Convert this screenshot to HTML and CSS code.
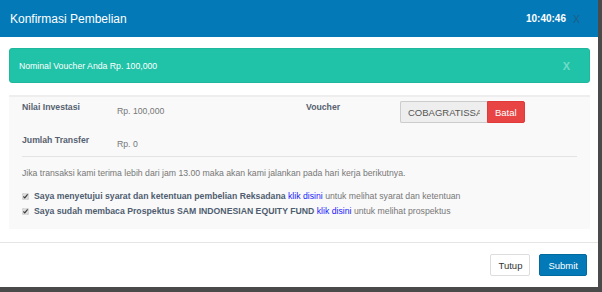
FILE: index.html
```html
<!DOCTYPE html>
<html lang="id">
<head>
    <meta charset="UTF-8">
    <title>Konfirmasi Pembelian</title>
    <link rel="stylesheet" href="styles.css">
</head>
<body>

    <div class="modal">
        <!-- Header -->
        <div class="modal-header">
            <h4 class="modal-title">Konfirmasi Pembelian</h4>
            <span class="clock">10:40:46</span>
            <span class="close">X</span>
        </div>

        <div class="modal-body">
            <div class="alert">
                <span>Nominal Voucher Anda Rp. 100,000</span>
                <span class="alert-close">X</span>
            </div>

            <div class="panel">
                <div class="info-grid">
                    <div class="label">Nilai Investasi</div>
                    <div class="value">Rp. 100,000</div>
                    <div class="label">Voucher</div>
                    <div class="voucher">
                        <input type="text" class="voucher-input" value="COBAGRATISSAJA" readonly>
                        <button class="btn btn-danger">Batal</button>
                    </div>

                    <div class="label">Jumlah Transfer</div>
                    <div class="value">Rp. 0</div>
                </div>

                <div class="notes">
                    <p class="note">Jika transaksi kami terima lebih dari jam 13.00 maka akan kami jalankan pada hari kerja berikutnya.</p>
                    <label class="check">
                        <input type="checkbox" checked>
                        <span><b>Saya menyetujui syarat dan ketentuan pembelian Reksadana</b> <a href="#">klik disini</a> untuk melihat syarat dan ketentuan</span>
                    </label>
                    <label class="check">
                        <input type="checkbox" checked>
                        <span><b>Saya sudah membaca Prospektus SAM INDONESIAN EQUITY FUND</b> <a href="#">klik disini</a> untuk melihat prospektus</span>
                    </label>
                </div>
            </div>
        </div>

        <!-- Footer -->
        <div class="modal-footer">
            <button class="btn btn-default">Tutup</button>
            <button class="btn btn-primary">Submit</button>
        </div>
    </div>

</body>
</html>
```

FILE: styles.css
```css
/* General Body Styling */
body {
    margin: 0;
    background: #4a4a4a;
    font-family: 'Liberation Sans', Arial, sans-serif;
    font-size: 8.7px;
    color: #666;
}

/* Modal */
.modal {
    width: 598px;
    height: 287px;
    background: #fff;
    display: flex;
    flex-direction: column;
}

.modal-header {
    height: 37px;
    background: #0379b7;
    display: flex;
    align-items: center;
    padding: 0 10px;
    color: #fff;
}

.modal-title {
    margin: 0;
    flex: 1;
    font-size: 12px;
    font-weight: normal;
}

.clock {
    font-weight: bold;
    font-size: 10px;
    margin-right: 7px;
}

.close {
    color: #1d5f86;
    font-size: 10.5px;
    padding-right: 8px;
}

.modal-body {
    padding: 11px 8px 0 9px;
    flex: 1;
}

/* Alert */
.alert {
    height: 35px;
    background: #20c3a7;
    border: 1px solid #1fb89d;
    border-radius: 3px;
    box-sizing: border-box;
    display: flex;
    align-items: center;
    justify-content: space-between;
    padding: 0 19px 0 9px;
    color: #fff;
    margin-bottom: 12px;
}

.alert-close {
    color: #6fdbc8;
    font-weight: bold;
    font-size: 11px;
}

/* Panel */
.panel {
    background: #f9f9f9;
    border-top: 2px solid #eeeeee;
    padding: 0 13px 8px;
}

.info-grid {
    display: grid;
    grid-template-columns: 95px 189px 94px auto;
    grid-template-rows: 33px 26px;
    border-bottom: 1px solid #e3e3e3;
}

.label {
    font-weight: bold;
    color: #56616f;
    padding-top: 5px;
}

.value {
    padding-top: 9px;
    color: #777;
}

.voucher {
    display: flex;
    padding-top: 4px;
    align-self: start;
}

.voucher-input {
    width: 87px;
    height: 22px;
    box-sizing: border-box;
    border: 1px solid #ccc;
    border-right: none;
    background: #eee;
    font-family: inherit;
    font-size: 9.5px;
    color: #555;
    padding: 0 7px;
    border-radius: 2px 0 0 2px;
    outline: none;
}

.notes {
    padding-top: 11px;
}

.note {
    margin: 0 0 13px;
    color: #777;
}

.check {
    display: flex;
    align-items: center;
    margin-bottom: 5px;
    color: #777;
}

.check b {
    color: #4f5d70;
}

.check input {
    width: 7px;
    height: 7px;
    margin: 0 5px 0 0;
    accent-color: #dcdcdc;
}

.check a {
    color: #1a1aff;
    text-decoration: none;
}

/* Buttons */
.btn {
    font-family: inherit;
    font-size: 9.5px;
    height: 22px;
    border-radius: 2px;
    border: 1px solid transparent;
    padding: 0 7px;
}

.btn-danger {
    background: #e84444;
    border-color: #e03a3a;
    color: #fff;
    border-radius: 0 2px 2px 0;
    padding: 0 7px;
}

.btn-default {
    background: #fff;
    border-color: #ddd;
    color: #333;
    margin-right: 9px;
}

.btn-primary {
    background: #0379b7;
    border-color: #036aa0;
    color: #fff;
    padding: 0 8px;
}

/* Footer */
.modal-footer {
    border-top: 1px solid #e5e5e5;
    height: 45px;
    box-sizing: border-box;
    display: flex;
    justify-content: flex-end;
    align-items: center;
    padding: 0 11px 0 0;
}
```
